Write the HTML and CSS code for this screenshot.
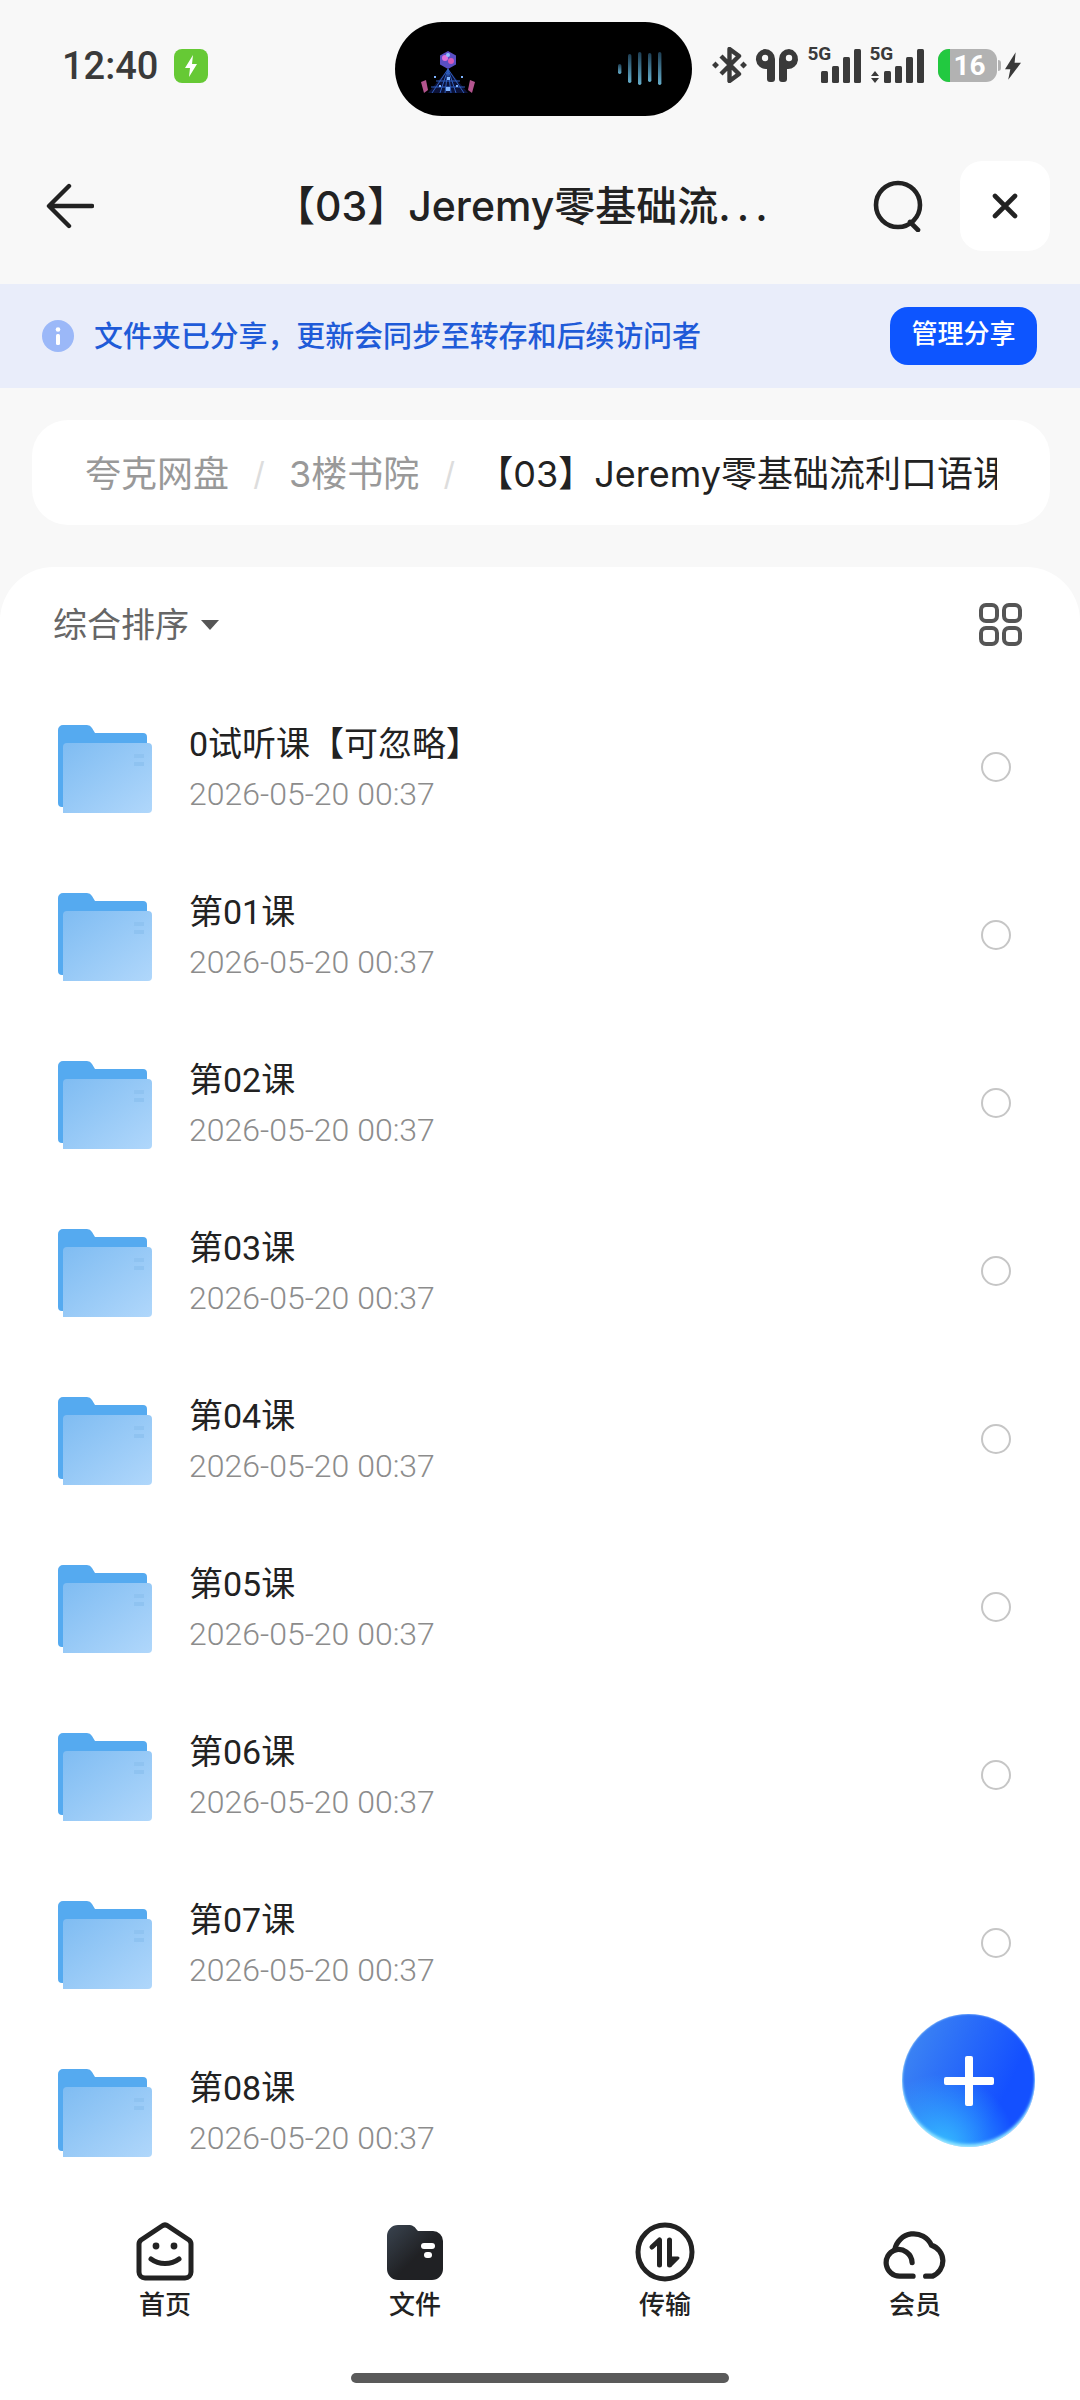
FILE: index.html
```html
<!DOCTYPE html>
<html lang="zh-CN">

<head>
    <meta charset="utf-8">
    <meta name="viewport" content="width=device-width, initial-scale=1.0">
    <title>夸克网盘</title>
    <link rel="stylesheet" href="styles.css">
</head>

<body>
    <svg class="defs" width="0" height="0">
        <defs>
            <linearGradient id="folderFront" x1="0" y1="0" x2="1" y2="1">
                <stop offset="0" stop-color="#7fbcf2"></stop>
                <stop offset="1" stop-color="#b0d7fb"></stop>
            </linearGradient>
            <linearGradient id="tabFolder" x1="0" y1="0" x2="1" y2="1">
                <stop offset="0" stop-color="#3a4450"></stop>
                <stop offset="0.55" stop-color="#202124"></stop>
            </linearGradient>
            <linearGradient id="waveFill" x1="0" y1="0" x2="0" y2="1">
                <stop offset="0" stop-color="#1d3d52"></stop>
                <stop offset="1" stop-color="#66aecb"></stop>
            </linearGradient>
            <symbol id="folder" viewBox="0 0 94 88">
                <path d="M0 5a5 5 0 0 1 5-5h24a6 6 0 0 1 5 3l3 5h48a4 4 0 0 1 4 4v70H4a4 4 0 0 1-4-4z" fill="#55aaf0"></path>
                <path d="M5 22a4 4 0 0 1 4-4h81a4 4 0 0 1 4 4v62a4 4 0 0 1-4 4H5z" fill="url(#folderFront)"></path>
                <rect x="76" y="29" width="10" height="4" fill="#8fc3f1"></rect>
                <rect x="76" y="37" width="10" height="4" fill="#8fc3f1"></rect>
            </symbol>
        </defs>
    </svg>

    <div class="status">
        <span class="time">12:40</span>
        <span class="charge">
            <svg width="16" height="24" viewBox="0 0 16 24"><path d="M10 1 2 14h5l-1 9 8-13H9z" fill="#fff"></path></svg>
        </span>
        <div class="island">
            <!-- album art + sound wave -->
            <svg class="art" width="56" height="46" viewBox="0 0 56 46">
                <path d="M28 2l8 4.500v9L28 20l-8-4.500v-9z" fill="#5a4fc4"></path>
                <circle cx="25" cy="9" r="3" fill="#e070d8"></circle>
                <circle cx="31" cy="12" r="3" fill="#d85ab8"></circle>
                <circle cx="28" cy="6" r="2" fill="#8fc0ff"></circle>
                <path d="M28 20 8 44h40z" fill="#0c1238"></path>
                <path d="M28 20 12 44M28 20l-8 24M28 20l-3 24M28 20l3 24M28 20l8 24M28 20l16 24M16 32h24M11 38h34" stroke="#2f5fc0" stroke-width="1" fill="none"></path>
                <g fill="#7fb4ff">
                    <rect x="27" y="28" width="3" height="3"></rect>
                    <rect x="26" y="38" width="4" height="4"></rect>
                    <rect x="14" y="27" width="2" height="2"></rect>
                    <rect x="41" y="27" width="2" height="2"></rect>
                    <rect x="19" y="36" width="2" height="2"></rect>
                    <rect x="36" y="36" width="2" height="2"></rect>
                </g>
                <path d="M1 33l5-2 2 10-4 3z" fill="#b4558f"></path>
                <path d="M55 33l-5-2-2 10 4 3z" fill="#b4558f"></path>
            </svg>
            <svg class="wave" width="46" height="36" viewBox="0 0 46 36">
                <rect x="0" y="13" width="3.400" height="10" rx="1.700" fill="url(#waveFill)"></rect>
                <rect x="10" y="3" width="3.400" height="29" rx="1.700" fill="url(#waveFill)"></rect>
                <rect x="20" y="1" width="3.400" height="33" rx="1.700" fill="url(#waveFill)"></rect>
                <rect x="30" y="2" width="3.400" height="29" rx="1.700" fill="url(#waveFill)"></rect>
                <rect x="40" y="1" width="3.400" height="33" rx="1.700" fill="url(#waveFill)"></rect>
            </svg>
        </div>
        <div class="status-icons">
            <svg width="35" height="36" viewBox="0 0 35 36">
                <path d="M9 9l18 18-9.500 7V2L27 9 9 27" fill="none" stroke="#3a3a3a" stroke-width="4.400" stroke-linejoin="round"></path>
                <path d="M3.500 14.500l3.500 3.500-3.500 3.500L0 18zM31.500 14.500l3.500 3.500-3.500 3.500L28 18z" fill="#3a3a3a"></path>
            </svg>
            <svg width="44" height="33" viewBox="0 0 44 33">
                <path d="M10 0a10 10 0 0 1 10 10v20a3 3 0 0 1-3 3h-2a3 3 0 0 1-3-3V20A10 10 0 0 1 10 0z" fill="#3a3a3a"></path>
                <path d="M34 0a10 10 0 0 0-10 10v20a3 3 0 0 0 3 3h2a3 3 0 0 0 3-3V20A10 10 0 0 0 34 0z" fill="#3a3a3a"></path>
                <circle cx="10" cy="9" r="3.200" fill="#f8f8f8"></circle>
                <circle cx="34" cy="9" r="3.200" fill="#f8f8f8"></circle>
            </svg>
            <div class="signal">
                <span class="sig-text">5G</span>
                <svg width="54" height="36" viewBox="0 0 54 36">
                    <rect x="14" y="24" width="7" height="12" rx="1.500"></rect>
                    <rect x="25" y="19" width="7" height="17" rx="1.500"></rect>
                    <rect x="36" y="10" width="7" height="26" rx="1.500"></rect>
                    <rect x="47" y="2" width="7" height="34" rx="1.500"></rect>
                </svg>
            </div>
            <div class="signal">
                <span class="sig-text">5G</span>
                <svg width="55" height="36" viewBox="0 0 55 36">
                    <path d="M6 24l4 5H2zM6 36l4-5H2z"></path>
                    <rect x="15" y="24" width="7" height="12" rx="1.500"></rect>
                    <rect x="26" y="19" width="7" height="17" rx="1.500"></rect>
                    <rect x="37" y="10" width="7" height="26" rx="1.500"></rect>
                    <rect x="48" y="2" width="7" height="34" rx="1.500"></rect>
                </svg>
            </div>
            <div class="battery"><span class="batt-fill"></span><span class="batt-num">16</span><span class="batt-cap"></span></div>
            <svg class="bolt" width="16" height="28" viewBox="0 0 15 26"><path d="M10 0 0 16h5L3 26l12-16H9z" fill="#3a3a3a"></path></svg>
        </div>
    </div>

    <header class="topbar">
        <svg class="back" width="48" height="46" viewBox="0 0 48 46">
            <path d="M23 3 3 23l20 20M4 23h42" fill="none" stroke="#222" stroke-width="4.400" stroke-linecap="round" stroke-linejoin="round"></path>
        </svg>
        <h1 class="title">【03】Jeremy零基础流<span class="dots">...</span></h1>
        <svg class="search" width="52" height="52" viewBox="0 0 52 52">
            <circle cx="26" cy="25" r="22" fill="none" stroke="#222" stroke-width="4.600"></circle>
            <path d="M38 42l8 8" stroke="#222" stroke-width="4.600" stroke-linecap="round"></path>
        </svg>
        <div class="close">
            <svg width="26" height="26" viewBox="0 0 26 26">
                <path d="M3 3l20 20M23 3 3 23" stroke="#222" stroke-width="4.600" stroke-linecap="round"></path>
            </svg>
        </div>
    </header>

    <div class="banner">
        <svg width="32" height="32" viewBox="0 0 32 32">
            <circle cx="16" cy="16" r="16" fill="#9bb8f8"></circle>
            <rect x="14" y="14" width="4" height="11" rx="1.500" fill="#fff"></rect>
            <circle cx="16" cy="9.500" r="2.300" fill="#fff"></circle>
        </svg>
        <span class="banner-text">文件夹已分享，更新会同步至转存和后续访问者</span>
        <span class="banner-btn">管理分享</span>
    </div>

    <nav class="crumbs">
        <div class="crumbs-inner">
            <span class="crumb">夸克网盘</span>
            <span class="slash">/</span>
            <span class="crumb">3楼书院</span>
            <span class="slash">/</span>
            <span class="crumb-now">【03】Jeremy零基础流利口语课</span>
        </div>
    </nav>

    <main class="sheet">
        <div class="sortbar">
            <span class="sort">综合排序</span>
            <span class="caret"></span>
            <svg class="grid-icon" width="44" height="44" viewBox="0 0 44 44">
                <g fill="none" stroke="#555" stroke-width="4">
                    <rect x="2" y="2" width="16" height="16" rx="5"></rect>
                    <rect x="25" y="2" width="16" height="16" rx="5"></rect>
                    <rect x="2" y="25" width="16" height="16" rx="5"></rect>
                    <rect x="25" y="25" width="16" height="16" rx="5"></rect>
                </g>
            </svg>
        </div>

        <ul class="files">
            <li class="file"><svg class="folder"><use href="#folder"></use></svg><div class="info"><div class="name">0试听课【可忽略】</div><div class="date">2026-05-20 00:37</div></div><span class="radio"></span></li>
            <li class="file"><svg class="folder"><use href="#folder"></use></svg><div class="info"><div class="name">第01课</div><div class="date">2026-05-20 00:37</div></div><span class="radio"></span></li>
            <li class="file"><svg class="folder"><use href="#folder"></use></svg><div class="info"><div class="name">第02课</div><div class="date">2026-05-20 00:37</div></div><span class="radio"></span></li>
            <li class="file"><svg class="folder"><use href="#folder"></use></svg><div class="info"><div class="name">第03课</div><div class="date">2026-05-20 00:37</div></div><span class="radio"></span></li>
            <li class="file"><svg class="folder"><use href="#folder"></use></svg><div class="info"><div class="name">第04课</div><div class="date">2026-05-20 00:37</div></div><span class="radio"></span></li>
            <li class="file"><svg class="folder"><use href="#folder"></use></svg><div class="info"><div class="name">第05课</div><div class="date">2026-05-20 00:37</div></div><span class="radio"></span></li>
            <li class="file"><svg class="folder"><use href="#folder"></use></svg><div class="info"><div class="name">第06课</div><div class="date">2026-05-20 00:37</div></div><span class="radio"></span></li>
            <li class="file"><svg class="folder"><use href="#folder"></use></svg><div class="info"><div class="name">第07课</div><div class="date">2026-05-20 00:37</div></div><span class="radio"></span></li>
            <li class="file"><svg class="folder"><use href="#folder"></use></svg><div class="info"><div class="name">第08课</div><div class="date">2026-05-20 00:37</div></div></li>
        </ul>

        <footer class="tabs">
            <div class="tab">
                <svg width="60" height="60" viewBox="0 0 60 60">
                    <path d="M4 22a5 5 0 0 1 2-4L27 4a5 5 0 0 1 6 0l21 14a5 5 0 0 1 2 4v28a6 6 0 0 1-6 6H10a6 6 0 0 1-6-6z" fill="none" stroke="#222" stroke-width="5" stroke-linejoin="round"></path>
                    <circle cx="21" cy="24" r="3.400" fill="#222"></circle>
                    <circle cx="39" cy="24" r="3.400" fill="#222"></circle>
                    <path d="M16 37c8 6 20 6 28 0" fill="none" stroke="#222" stroke-width="5" stroke-linecap="round"></path>
                </svg>
                <span class="tab-label">首页</span>
            </div>
            <div class="tab">
                <svg width="60" height="60" viewBox="0 0 60 60">
                    <path d="M2 14a11 11 0 0 1 11-11h10c5 0 7 2 9 5l1 1h15a10 10 0 0 1 10 10v28a11 11 0 0 1-11 11H13A11 11 0 0 1 2 47z" fill="url(#tabFolder)"></path>
                    <rect x="36" y="21" width="14" height="6" rx="3" fill="#fff"></rect>
                    <rect x="39" y="30" width="8" height="6" rx="3" fill="#fff"></rect>
                </svg>
                <span class="tab-label">文件</span>
            </div>
            <div class="tab">
                <svg width="60" height="60" viewBox="0 0 60 60">
                    <circle cx="30" cy="30" r="27" fill="none" stroke="#222" stroke-width="5"></circle>
                    <path d="M17 25l7.500-7v25" fill="none" stroke="#222" stroke-width="5" stroke-linecap="round" stroke-linejoin="round"></path>
                    <path d="M34.500 18v25" fill="none" stroke="#222" stroke-width="5" stroke-linecap="round"></path>
                    <path d="M36 43l7-7h-7z" fill="#222" stroke="#222" stroke-width="3" stroke-linejoin="round"></path>
                </svg>
                <span class="tab-label">传输</span>
            </div>
            <div class="tab">
                <svg width="64" height="60" viewBox="0 0 64 62">
                    <path d="M30 56H16a14 14 0 0 1-5-27 20 20 0 0 1 38-5 17 17 0 0 1 1 32h-7" fill="none" stroke="#222" stroke-width="5.400" stroke-linecap="round"></path>
                    <path d="M11 29a14 14 0 0 1 18 13" fill="none" stroke="#222" stroke-width="5.400" stroke-linecap="round"></path>
                </svg>
                <span class="tab-label">会员</span>
            </div>
        </footer>
    </main>

    <div class="fab">
        <svg width="50" height="50" viewBox="0 0 50 50">
            <rect x="21" y="0" width="8" height="50" rx="2" fill="#fff"></rect>
            <rect x="0" y="21" width="50" height="8" rx="2" fill="#fff"></rect>
        </svg>
    </div>
    <div class="homebar"></div>
</body>

</html>
```

FILE: styles.css
```css
* {
    box-sizing: border-box;
}

html,
body {
    margin: 0;
    padding: 0;
}

body {
    position: relative;
    width: 1080px;
    height: 2400px;
    overflow: hidden;
    display: flex;
    flex-direction: column;
    background-color: #f8f8f8;
    color: #222;
    font-family: Inter, "Noto Sans CJK SC", sans-serif;
}

.defs {
    position: absolute;
}

/* status bar */
.status {
    flex: none;
    height: 128px;
    padding: 22px 0 0 62px;
    display: flex;
    align-items: flex-start;
}

.time {
    margin-top: 21px;
    font-family: Roboto, sans-serif;
    font-size: 38px;
    line-height: 46px;
    font-weight: 500;
    color: #3a3a3a;
}

.charge {
    width: 34px;
    height: 34px;
    margin: 27px 0 0 16px;
    border-radius: 8px;
    background-color: #66c935;
    display: flex;
    align-items: center;
    justify-content: center;
}

.island {
    width: 297px;
    height: 94px;
    margin-left: 187px;
    padding: 0 28px 0 25px;
    border-radius: 47px;
    background-color: #000;
    display: flex;
    align-items: center;
    justify-content: space-between;
}

.art {
    margin-top: 6px;
}

.status-icons {
    margin-left: 20px;
    height: 86px;
    display: flex;
    align-items: center;
    gap: 8px;
}

.signal {
    position: relative;
    fill: #3a3a3a;
    display: flex;
}

.sig-text {
    position: absolute;
    left: 0;
    top: -3px;
    font-family: Roboto, sans-serif;
    font-size: 19px;
    line-height: 20px;
    font-weight: 700;
    color: #3a3a3a;
}

.battery {
    position: relative;
    width: 59px;
    height: 33px;
    margin-left: 6px;
    border-radius: 11px;
    background-color: #b2b2b2;
    display: flex;
    align-items: center;
}

.batt-fill {
    width: 12px;
    height: 33px;
    border-radius: 11px 0 0 11px;
    background-color: #22c940;
}

.batt-num {
    margin-left: 3px;
    font-family: Roboto, sans-serif;
    font-size: 28px;
    line-height: 33px;
    font-weight: 700;
    color: #fff;
}

.batt-cap {
    position: absolute;
    right: -4px;
    top: 11px;
    width: 3px;
    height: 11px;
    border-radius: 0 3px 3px 0;
    background-color: #b2b2b2;
}

.bolt {
    margin-top: 2px;
}

/* header */
.topbar {
    flex: none;
    height: 156px;
    padding: 0 30px 0 46px;
    display: flex;
    align-items: center;
}

.title {
    flex: 1;
    margin: 0;
    padding-left: 180px;
    font-size: 41px;
    line-height: 56px;
    font-weight: 500;
    white-space: nowrap;
}

.dots {
    letter-spacing: 6px;
}

.search {
    margin-right: 36px;
}

.close {
    width: 90px;
    height: 90px;
    border-radius: 22px;
    background-color: #fff;
    display: flex;
    align-items: center;
    justify-content: center;
}

/* share banner */
.banner {
    flex: none;
    height: 104px;
    padding: 0 42px;
    background-color: #e9edfa;
    display: flex;
    align-items: center;
}

.banner-text {
    flex: 1;
    margin: -4px 0 0 20px;
    font-size: 29px;
    font-weight: 500;
    letter-spacing: -.1px;
    color: #1f5bd8;
}

.banner-btn {
    width: 147px;
    height: 58px;
    margin-right: 1px;
    border-radius: 18px;
    background-color: #0d55ff;
    color: #fff;
    font-size: 26px;
    font-weight: 500;
    line-height: 54px;
    text-align: center;
}

/* breadcrumb */
.crumbs {
    flex: none;
    height: 105px;
    margin: 32px 30px 0 32px;
    padding: 0 53px;
    border-radius: 36px;
    background-color: #fff;
    display: flex;
    align-items: center;
}

.crumbs-inner {
    width: 100%;
    margin-top: 2px;
    overflow: hidden;
    display: flex;
    align-items: center;
    white-space: nowrap;
    font-size: 36px;
    line-height: 50px;
}

.crumb {
    flex: none;
    color: #999;
}

.slash {
    flex: none;
    width: 60px;
    text-align: center;
    color: #ddd;
    font-size: 32px;
}

.crumb-now {
    flex: none;
    margin-left: -2px;
    color: #222;
}

/* file sheet */
.sheet {
    flex: 1;
    min-height: 0;
    margin-top: 42px;
    border-radius: 54px 54px 0 0;
    background-color: #fff;
    display: flex;
    flex-direction: column;
}

.sortbar {
    flex: none;
    height: 116px;
    padding: 0 57px 0 53px;
    display: flex;
    align-items: center;
}

.sort {
    margin-top: -5px;
    font-size: 34px;
    color: #666;
}

.caret {
    width: 0;
    height: 0;
    margin: 0 0 0 12px;
    border-left: 9px solid transparent;
    border-right: 9px solid transparent;
    border-top: 10px solid #555;
}

.grid-icon {
    margin-left: auto;
}

.files {
    flex: 1;
    min-height: 0;
    margin: 0;
    padding: 0;
    list-style: none;
    overflow: hidden;
}

.file {
    height: 168px;
    padding: 0 69px 0 58px;
    display: flex;
    align-items: center;
}

.folder {
    flex: none;
    width: 94px;
    height: 88px;
    margin-top: 3px;
}

.info {
    flex: 1;
    margin: 1px 0 0 37px;
}

.name {
    font-family: Roboto, "Noto Sans CJK SC", sans-serif;
    font-size: 34px;
    line-height: 46px;
    color: #222;
}

.date {
    margin-top: 6px;
    font-family: Roboto, sans-serif;
    font-size: 32px;
    line-height: 42px;
    font-weight: 300;
    color: #8c8c8c;
}

.radio {
    flex: none;
    width: 30px;
    height: 30px;
    border: 2.5px solid #c6c6c6;
    border-radius: 50%;
}

/* bottom tabs */
.tabs {
    flex: none;
    height: 220px;
    padding: 42px 40px 0;
    background-color: #fff;
    display: grid;
    grid-template-columns: repeat(4, 1fr);
    align-items: start;
}

.tab {
    display: flex;
    flex-direction: column;
    align-items: center;
}

.tab svg {
    flex: none;
}

.tab-label {
    margin-top: 5px;
    font-size: 26px;
    line-height: 36px;
    font-weight: 500;
    color: #222;
}

.fab {
    position: absolute;
    left: 902px;
    top: 2014px;
    width: 133px;
    height: 133px;
    border-radius: 50%;
    background: radial-gradient(circle at 30% 100%, #35bcff 0, rgba(53, 188, 255, 0) 45%), linear-gradient(115deg, #3f88f2 5%, #1450ff 72%);
    box-shadow: inset 0 0 2px #c4ecff, inset 0 -3px 3px #86e0ff;
    display: flex;
    align-items: center;
    justify-content: center;
}

.homebar {
    position: absolute;
    left: 351px;
    top: 2373px;
    width: 378px;
    height: 10px;
    border-radius: 5px;
    background-color: #5a5a5a;
}
```
